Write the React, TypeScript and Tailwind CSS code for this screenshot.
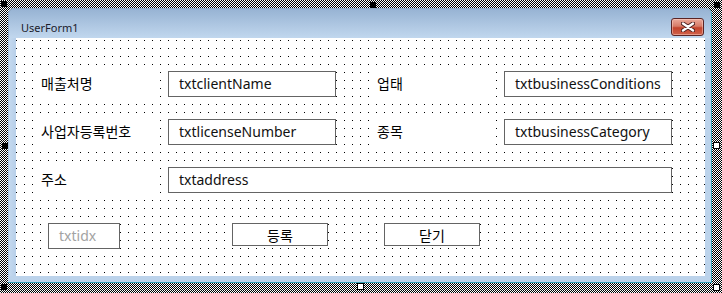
import React from "react";

const KR = "font-['Noto_Sans_CJK_KR','Noto_Sans',sans-serif]";
const LAT = "font-['Noto_Sans','Noto_Sans_CJK_KR',sans-serif]";

function Label({ text, w }: { text: string; w: string }) {
  return (
    <div className={`${w} h-[32px] shrink-0 bg-white flex items-center pl-[2px] text-[14px] text-black ${KR}`}>
      <span className="leading-[18px] -mt-[2px]">{text}</span>
    </div>
  );
}

function TextBox({ text, w, ml, dim }: { text: string; w: string; ml: string; dim?: boolean }) {
  return (
    <div
      className={`${w} ${ml} h-[26px] shrink-0 bg-white border border-[#646464] pl-[10px] flex items-center text-[14px] leading-[24px] ${LAT} ${
        dim ? "text-[#a3a3a3]" : "text-[#111]"
      }`}
    >
      {text}
    </div>
  );
}

function Btn({ text, ml }: { text: string; ml: string }) {
  return (
    <div
      className={`w-[96px] h-[23px] ${ml} shrink-0 bg-white border border-[#646464] flex items-center justify-center text-[14px] leading-[18px] text-black ${KR}`}
    >
      {text}
    </div>
  );
}

function Handle({ pos, white }: { pos: string; white?: boolean }) {
  return (
    <div
      className={`absolute ${pos} ${
        white ? "w-[7px] h-[7px] bg-white border border-black" : "w-[6px] h-[6px] bg-black"
      }`}
    />
  );
}

export default function App() {
  return (
    <div className="relative w-[722px] h-[293px] overflow-hidden bg-[image:repeating-conic-gradient(#000_0_25%,#fff_0_50%)] bg-[length:2px_2px] pl-[8px] pt-[8px] pr-[10px] pb-[10px]">
      <div className="w-[704px] h-[275px] flex flex-col border-r border-b border-[#38a0b4] rounded-t-[6px] bg-[#bcd3eb]">
        {/* title bar */}
        <div className="h-[30px] shrink-0 flex items-start justify-between rounded-t-[6px] border-t border-l border-[#8ea7c3] bg-linear-to-b from-[#97b3d3] to-[#c1d7ee]">
          <div className={`pl-[12px] pt-[11px] text-[11px] leading-[16px] text-[#1b1b2b] ${LAT}`}>UserForm1</div>
          <div className="mt-[9px] mr-[7px] w-[33px] h-[18px] rounded-[3px] border border-[#5a2424] bg-[linear-gradient(#eba99a_0%,#d77b67_45%,#c2432c_55%,#d0614a_100%)] flex items-center justify-center shadow-[inset_0_0_0_1px_rgba(255,220,210,0.45)]">
            <svg width="14" height="10" viewBox="0 0 14 10">
              <path d="M2 1.5 L12 8.5 M12 1.5 L2 8.5" stroke="#4a1e1e" strokeWidth="4.2" strokeLinecap="round" />
              <path d="M2 1.5 L12 8.5 M12 1.5 L2 8.5" stroke="#ffffff" strokeWidth="2.4" strokeLinecap="round" />
            </svg>
          </div>
        </div>
        {/* body */}
        <div className="flex flex-1 border-l border-[#a9c2dd]">
          <div className="w-[7px] shrink-0 bg-linear-to-r from-[#c4d9ef] to-[#b7cfe9]" />
          <div className="w-[689px] h-[238px] shrink-0 bg-white bg-[image:linear-gradient(to_right,transparent_1px,#fff_1px),linear-gradient(#000_1px,#fff_1px)] bg-[length:8px_8px] bg-[position:0px_2px] pt-[33px] pl-[23px] flex flex-col">
            <div className="h-[26px] flex items-center">
              <Label text="매출처명" w="w-[116px]" />
              <TextBox text="txtclientName" w="w-[168px]" ml="ml-[13px]" />
              <div className="ml-[39px]">
                <Label text="업태" w="w-[120px]" />
              </div>
              <TextBox text="txtbusinessConditions" w="w-[168px]" ml="ml-[9px]" />
            </div>
            <div className="h-[26px] mt-[22px] flex items-center">
              <Label text="사업자등록번호" w="w-[116px]" />
              <TextBox text="txtlicenseNumber" w="w-[168px]" ml="ml-[13px]" />
              <div className="ml-[39px]">
                <Label text="종목" w="w-[120px]" />
              </div>
              <TextBox text="txtbusinessCategory" w="w-[168px]" ml="ml-[9px]" />
            </div>
            <div className="h-[26px] mt-[22px] flex items-center">
              <Label text="주소" w="w-[116px]" />
              <TextBox text="txtaddress" w="w-[504px]" ml="ml-[13px]" />
            </div>
            <div className="h-[26px] mt-[30px] flex items-start">
              <TextBox text="txtidx" w="w-[72px]" ml="ml-[9px]" dim />
              <Btn text="등록" ml="ml-[112px]" />
              <Btn text="닫기" ml="ml-[56px]" />
            </div>
          </div>
          <div className="w-[6px] shrink-0 bg-[#bcd3eb]" />
        </div>
        <div className="h-[6px] shrink-0 bg-[#bcd3eb]" />
      </div>

      <Handle pos="left-[1px] top-[1px]" />
      <Handle pos="left-[370px] top-[2px]" />
      <Handle pos="left-[714px] top-[2px]" />
      <Handle pos="left-[2px] top-[143px]" />
      <Handle pos="left-[1px] top-[284px]" />
      <Handle pos="left-[713px] top-[142px]" white />
      <Handle pos="left-[357px] top-[283px]" white />
      <Handle pos="left-[713px] top-[284px]" white />
    </div>
  );
}
